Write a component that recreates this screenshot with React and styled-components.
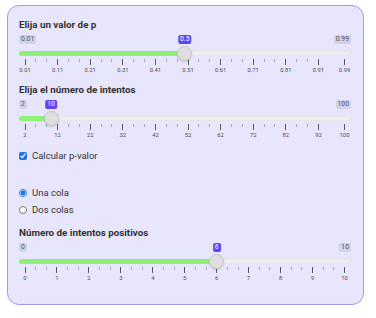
import React from 'react';
import styled, { createGlobalStyle } from 'styled-components';

const GlobalStyle = createGlobalStyle`
  body {
    margin: 0;
    background: #ffffff;
    font-family: Roboto, "Liberation Sans", sans-serif;
  }
`;

const Card = styled.div`
  box-sizing: border-box;
  width: 357px;
  height: 300px;
  margin: 4.5px 0 0 6.5px;
  padding: 13.5px 11.5px 0;
  background: #e8e6fd;
  border: 1.5px solid #a597ec;
  border-radius: 12px;
  display: flex;
  flex-direction: column;
`;

const Title = styled.div`
  font-size: 9.8px;
  line-height: 12px;
  font-weight: 700;
  color: #333;
  margin-top: ${p => p.$top || 0}px;
`;

const SliderBox = styled.div`
  position: relative;
  height: 40px;
  margin-top: 3.5px;
`;

const Edges = styled.div`
  display: flex;
  justify-content: space-between;
`;

const EdgeLabel = styled.span`
  font-size: 6.8px;
  line-height: 9.5px;
  padding: 0 2px;
  background: rgba(0, 0, 0, 0.09);
  border-radius: 2px;
  color: #555;
`;

const Track = styled.div`
  position: absolute;
  left: 0;
  right: 0;
  top: 16.5px;
  height: 5px;
  border-radius: 3px;
  background: #eeeeee;
  box-shadow: inset 0 0 0 0.5px #dedede;
`;

const Fill = styled.div`
  position: absolute;
  left: 0;
  top: 0;
  bottom: 0;
  background: #8ff07b;
  border-radius: 3px;
`;

const Rail = styled.div`
  position: absolute;
  left: 6px;
  right: 6.5px;
  top: 0;
  bottom: 0;
`;

const Tick = styled.span`
  position: absolute;
  top: 24px;
  width: 1px;
  margin-left: -0.5px;
  height: ${p => (p.$big ? 6 : 3)}px;
  background: ${p => (p.$big ? '#5a5a5a' : '#a8a8a8')};
`;

const TickText = styled.span`
  position: absolute;
  top: 32.5px;
  font-size: 5.8px;
  line-height: 7px;
  color: #4a4a4a;
  transform: translateX(-50%);
  white-space: nowrap;
`;

const Handle = styled.div`
  position: absolute;
  top: 11.5px;
  width: 15px;
  height: 15px;
  margin-left: -7.5px;
  box-sizing: border-box;
  border-radius: 50%;
  background: #dedede;
  border: 1px solid #c8c8c8;
  box-shadow: 0 1px 2px rgba(0, 0, 0, 0.15);
`;

const Bubble = styled.span`
  position: absolute;
  top: 0;
  transform: translateX(-50%);
  font-size: 6.8px;
  line-height: 9.5px;
  padding: 0 2px;
  border-radius: 2px;
  background: #5b48f2;
  color: #fff;
`;

const OptionRow = styled.label`
  display: flex;
  align-items: center;
  gap: 5px;
  font-size: 9.5px;
  line-height: 12px;
  color: #333;
  margin-top: ${p => p.$top || 0}px;

  input {
    width: 8px;
    height: 8px;
    margin: 0;
    accent-color: #1a73e8;
  }
`;

const Slider = ({ min, max, value, marks }) => {
  const frac = v => (v - min) / (max - min);
  const f = frac(value);
  const ticks = [];
  marks.forEach((m, i) => {
    const pos = frac(m.v);
    ticks.push(<Tick key={'b' + i} $big style={{ left: pos * 100 + '%' }} />);
    ticks.push(
      <TickText key={'t' + i} style={{ left: pos * 100 + '%' }}>
        {m.label}
      </TickText>
    );
    if (i > 0) {
      const prev = frac(marks[i - 1].v);
      const full = frac(marks[1].v) - frac(marks[0].v);
      if (pos - prev > full * 0.99) {
        for (let z = 1; z <= 2; z++) {
          const sp = prev + ((pos - prev) * z) / 3;
          ticks.push(<Tick key={'s' + i + z} style={{ left: sp * 100 + '%' }} />);
        }
      }
    }
  });

  return (
    <SliderBox>
      <Edges>
        <EdgeLabel>{marks[0].label}</EdgeLabel>
        <EdgeLabel>{marks[marks.length - 1].label}</EdgeLabel>
      </Edges>
      <Track>
        <Fill style={{ width: `calc(6px + (100% - 12.5px) * ${f})` }} />
      </Track>
      <Rail>
        {ticks}
        <Handle style={{ left: f * 100 + '%' }} />
        <Bubble style={{ left: f * 100 + '%' }}>{value}</Bubble>
      </Rail>
    </SliderBox>
  );
};

const pMarks = [0.01, 0.11, 0.21, 0.31, 0.41, 0.51, 0.61, 0.71, 0.81, 0.91, 0.99].map(v => ({
  v,
  label: v.toFixed(2),
}));
const nMarks = [2, 12, 22, 32, 42, 52, 62, 72, 82, 92, 100].map(v => ({ v, label: String(v) }));
const kMarks = [0, 1, 2, 3, 4, 5, 6, 7, 8, 9, 10].map(v => ({ v, label: String(v) }));

const App = () => {
  return (
    <>
      <GlobalStyle />
      <Card>
        <Title>Elija un valor de p</Title>
        <Slider min={0.01} max={0.99} value={0.5} marks={pMarks} />
        <Title $top={9.5}>Elija el número de intentos</Title>
        <Slider min={2} max={100} value={10} marks={nMarks} />
        <OptionRow $top={10}>
          <input type="checkbox" defaultChecked />
          Calcular p-valor
        </OptionRow>
        <OptionRow $top={25}>
          <input type="radio" name="colas" defaultChecked />
          Una cola
        </OptionRow>
        <OptionRow $top={5}>
          <input type="radio" name="colas" />
          Dos colas
        </OptionRow>
        <Title $top={11.5}>Número de intentos positivos</Title>
        <Slider min={0} max={10} value={6} marks={kMarks} />
      </Card>
    </>
  );
};

export default App;
